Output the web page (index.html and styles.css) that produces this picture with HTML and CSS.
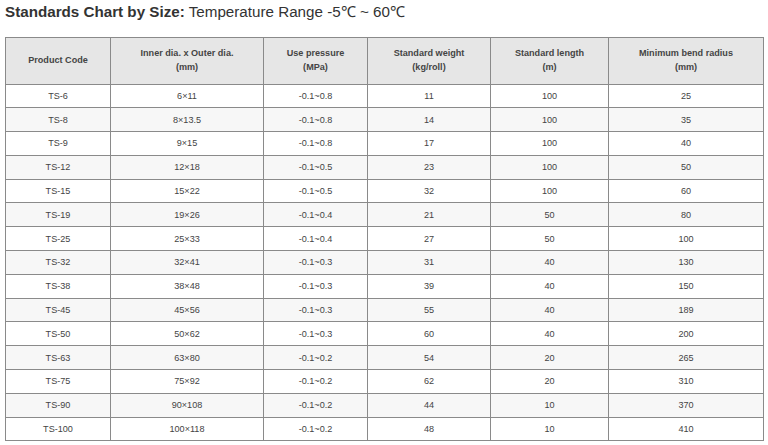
FILE: index.html
```html
<!DOCTYPE html>
<html>
<head>
<meta charset="utf-8">
<link rel="stylesheet" href="styles.css">
</head>
<body>
<h2 class="title"><strong>Standards Chart by Size:</strong> Temperature Range -5℃ ~ 60℃</h2>
<table class="chart">
  <colgroup>
    <col class="c1"><col class="c2"><col class="c3"><col class="c4"><col class="c5"><col class="c6">
  </colgroup>
  <thead>
    <tr>
      <th>Product Code</th>
      <th>Inner dia. x Outer dia.<br>(mm)</th>
      <th>Use pressure<br>(MPa)</th>
      <th>Standard weight<br>(kg/roll)</th>
      <th>Standard length<br>(m)</th>
      <th>Minimum bend radius<br>(mm)</th>
    </tr>
  </thead>
  <tbody>
    <tr><td>TS-6</td><td>6×11</td><td>-0.1~0.8</td><td>11</td><td>100</td><td>25</td></tr>
    <tr><td>TS-8</td><td>8×13.5</td><td>-0.1~0.8</td><td>14</td><td>100</td><td>35</td></tr>
    <tr><td>TS-9</td><td>9×15</td><td>-0.1~0.8</td><td>17</td><td>100</td><td>40</td></tr>
    <tr><td>TS-12</td><td>12×18</td><td>-0.1~0.5</td><td>23</td><td>100</td><td>50</td></tr>
    <tr><td>TS-15</td><td>15×22</td><td>-0.1~0.5</td><td>32</td><td>100</td><td>60</td></tr>
    <tr><td>TS-19</td><td>19×26</td><td>-0.1~0.4</td><td>21</td><td>50</td><td>80</td></tr>
    <tr><td>TS-25</td><td>25×33</td><td>-0.1~0.4</td><td>27</td><td>50</td><td>100</td></tr>
    <tr><td>TS-32</td><td>32×41</td><td>-0.1~0.3</td><td>31</td><td>40</td><td>130</td></tr>
    <tr><td>TS-38</td><td>38×48</td><td>-0.1~0.3</td><td>39</td><td>40</td><td>150</td></tr>
    <tr><td>TS-45</td><td>45×56</td><td>-0.1~0.3</td><td>55</td><td>40</td><td>189</td></tr>
    <tr><td>TS-50</td><td>50×62</td><td>-0.1~0.3</td><td>60</td><td>40</td><td>200</td></tr>
    <tr><td>TS-63</td><td>63×80</td><td>-0.1~0.2</td><td>54</td><td>20</td><td>265</td></tr>
    <tr><td>TS-75</td><td>75×92</td><td>-0.1~0.2</td><td>62</td><td>20</td><td>310</td></tr>
    <tr><td>TS-90</td><td>90×108</td><td>-0.1~0.2</td><td>44</td><td>10</td><td>370</td></tr>
    <tr><td>TS-100</td><td>100×118</td><td>-0.1~0.2</td><td>48</td><td>10</td><td>410</td></tr>
  </tbody>
</table>
</body>
</html>
```
FILE: styles.css
```css
html, body {
  margin: 0;
  padding: 0;
  background: #fff;
}
body {
  padding: 3px 5px 0 5px;
  font-family: "Liberation Sans", Arial, sans-serif;
  color: #333;
}
.title {
  margin: 0;
  font-size: 15.2px;
  line-height: 18px;
  font-weight: normal;
  color: #333;
}
.title strong {
  font-weight: bold;
}
.chart {
  margin-top: 16px;
  width: 758px;
  border-collapse: collapse;
  table-layout: fixed;
  font-size: 9.1px;
  color: #444;
}
.c1 { width: 105px; }
.c2 { width: 153px; }
.c3 { width: 104px; }
.c4 { width: 123px; }
.c5 { width: 118px; }
.c6 { width: 155px; }
.chart th, .chart td {
  border: 1px solid #8a8a8a;
  text-align: center;
  vertical-align: middle;
  padding: 0;
}
.chart th {
  background: #e6e6e6;
  font-weight: bold;
  height: 45.5px;
  line-height: 13.5px;
}
.chart td {
  height: 22.8px;
  line-height: 12px;
}
.chart tbody tr:nth-child(even) td {
  background: #f7f7f7;
}
```
